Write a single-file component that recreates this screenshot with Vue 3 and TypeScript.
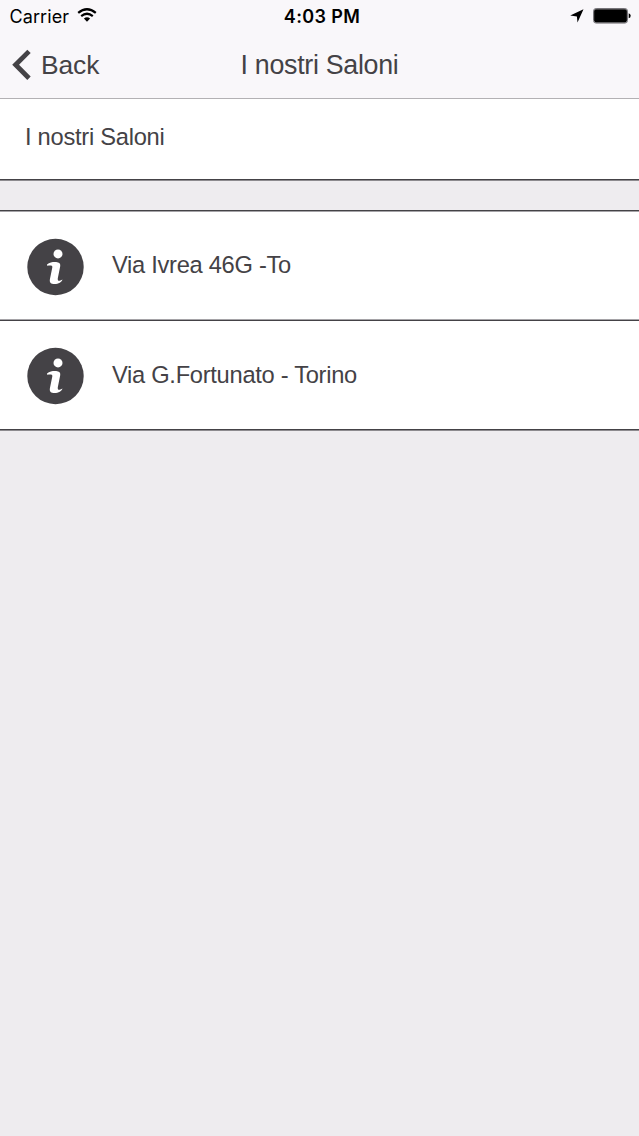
<script setup lang="ts">
interface Salon {
  id: number
  name: string
}

const title = 'I nostri Saloni'
const salons: Salon[] = [
  { id: 1, name: 'Via Ivrea 46G -To' },
  { id: 2, name: 'Via G.Fortunato - Torino' },
]
</script>

<template>
  <div class="screen">
    <header class="top">
      <div class="status">
        <div class="carrier">
          <span class="carrier-name">Carrier</span>
          <svg class="wifi" width="20" height="14" viewBox="0 0 20 14">
            <path d="M1.2 4.8 Q10 -2.2 18.8 4.8" fill="none" stroke="#000" stroke-width="2.3" />
            <path d="M4.2 8.1 Q10 3.4 15.8 8.1" fill="none" stroke="#000" stroke-width="2.2" />
            <path d="M6.9 10.6 Q10 8 13.1 10.6 L10 13.7 Z" fill="#000" />
          </svg>
        </div>
        <time class="time">4:03 PM</time>
        <div class="indicators">
          <svg class="location" width="14" height="14" viewBox="0 0 14 14">
            <path d="M13.5 0.3 L7.5 13.6 L6.9 7.4 L0.2 6.6 Z" fill="#000" />
          </svg>
          <svg class="battery" width="38" height="16" viewBox="0 0 38 16">
            <rect x="0.5" y="0.5" width="34" height="14.6" rx="2.6" fill="#f9f7fa" stroke="#77757a" />
            <rect x="1.1" y="1.2" width="32.8" height="13.2" rx="1.8" fill="#000" />
            <path d="M35.7 5.3 Q37.7 5.8 37.7 7.8 T35.7 10.3 Z" fill="#000" />
          </svg>
        </div>
      </div>
      <nav class="nav">
        <button class="back" type="button">
          <svg class="chevron" width="20" height="32" viewBox="0 0 20 32">
            <path d="M18 2.4 L4.6 15.8 L18 29.2" fill="none" stroke="#444246" stroke-width="4.8" />
          </svg>
          <span>Back</span>
        </button>
        <h1 class="title">{{ title }}</h1>
      </nav>
    </header>
    <main>
      <h2 class="intro">{{ title }}</h2>
      <ul class="list">
        <li v-for="salon in salons" :key="salon.id" class="row">
          <svg class="info" width="58" height="58" viewBox="0 0 58 58">
            <circle cx="29.5" cy="29" r="28.2" fill="#444246" />
            <circle cx="32" cy="15.9" r="4.5" fill="#fff" />
            <path
              d="M21 26.4 C24 24.2 28 23.8 31.2 24.2 C33.7 24.5 34.6 25.9 34.2 28.2 L31.8 40.3 C31.5 42.2 32.2 43 33.6 42.8 C34.6 42.6 35.5 42.1 36.4 41.6 C36 44.3 32.4 46.1 28.6 46.1 C24.9 46.1 23.3 44.5 23.9 41.2 L26.3 29.5 C26.7 27.4 25 27.1 21.2 27.8 Z"
              fill="#fff"
            />
          </svg>
          <span class="name">{{ salon.name }}</span>
        </li>
      </ul>
    </main>
  </div>
</template>

<style>
body {
  background: #eeecef;
}
</style>

<style scoped>
.screen {
  min-height: 1136px;
  background: #eeecef;
  color: #444246;
  font-family: "Liberation Sans", Arial, sans-serif;
}

.top {
  box-sizing: border-box;
  height: 99px;
  background: #f9f7fa;
  border-bottom: 1px solid #b3b1b4;
}

.status {
  box-sizing: border-box;
  display: grid;
  grid-template-columns: 1fr auto 1fr;
  align-items: center;
  height: 32px;
  padding: 1px 8px 0 9.5px;
  color: #000;
  font-family: Inter, "Liberation Sans", sans-serif;
  font-size: 18px;
  line-height: 31px;
}

.carrier {
  display: flex;
  align-items: center;
  gap: 7.5px;
}

.carrier-name {
  letter-spacing: 0.1px;
}

.wifi {
  margin-top: -3px;
}

.time {
  font-weight: 600;
  letter-spacing: 0.35px;
  margin-left: 3.5px;
}

.indicators {
  display: flex;
  justify-content: flex-end;
  align-items: center;
  gap: 9px;
  margin-top: -1px;
}

.nav {
  display: grid;
  grid-template-columns: 1fr auto 1fr;
  align-items: center;
  height: 66px;
}

.back {
  display: flex;
  align-items: center;
  gap: 10px;
  justify-self: start;
  padding: 0 0 0 11px;
  border: 0;
  background: none;
  color: inherit;
  font: 26.4px/32px "Liberation Sans", Arial, sans-serif;
  letter-spacing: -0.1px;
}

.title {
  margin: 0;
  font-size: 26.8px;
  font-weight: 400;
  letter-spacing: -0.3px;
  line-height: 32px;
}

.intro {
  box-sizing: border-box;
  height: 81px;
  margin: 0 0 30px;
  padding: 23px 25px 0;
  background: #fff;
  border-bottom: 1px solid #444246;
  box-shadow: 0 1px 0 #8d8b8f;
  font-size: 23.7px;
  font-weight: 400;
  letter-spacing: -0.27px;
  line-height: 30px;
}

.list {
  margin: 0;
  padding: 0;
  list-style: none;
  border-top: 1px solid #444246;
}

.row {
  box-sizing: border-box;
  display: flex;
  align-items: center;
  gap: 28px;
  height: 110px;
  padding: 2px 26px 0;
  background: #fff;
  border-bottom: 1px solid #444246;
}

.row:first-child {
  box-shadow: inset 0 1px 0 #a5a3a7, inset 0 -1px 0 #a5a3a7;
}

.row:last-child {
  height: 109px;
  box-shadow: 0 1px 0 #8d8b8f;
}

.name {
  margin-top: -3px;
  font-size: 23.7px;
  letter-spacing: -0.29px;
  line-height: 30px;
}
</style>
